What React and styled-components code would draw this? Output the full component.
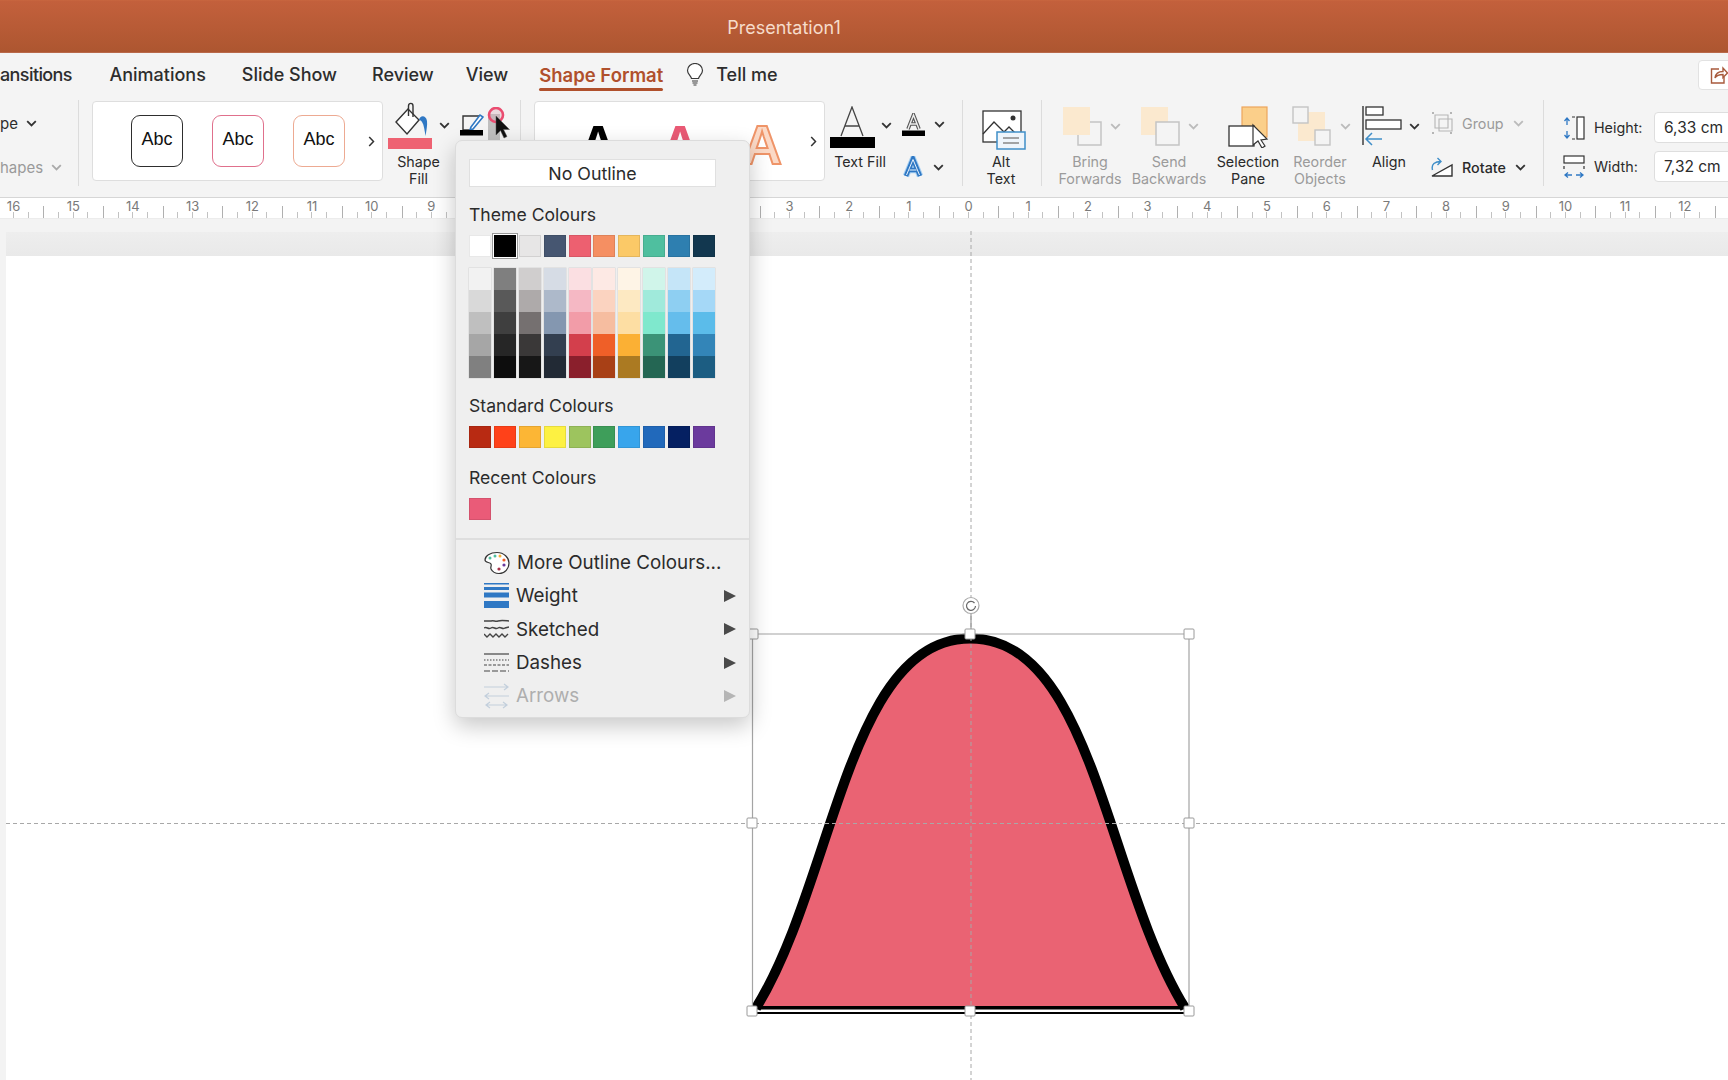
import React from "react";
import styled, { createGlobalStyle } from "styled-components";

const GlobalStyle = createGlobalStyle`
  html, body {
    margin: 0;
    padding: 0;
    background: #fff;
  }
  body {
    font-family: Inter, "Liberation Sans", sans-serif;
    color: #2b2b2b;
  }
  svg {
    display: block;
    flex: none;
  }
`;

const Page = styled.div`
  position: relative;
  width: 1728px;
  height: 1080px;
  overflow: hidden;
  display: flex;
  flex-direction: column;
  background: #f4f4f4;
`;

const TitleBar = styled.div`
  height: 53px;
  flex: none;
  display: flex;
  align-items: center;
  justify-content: center;
  box-sizing: border-box;
  padding: 3px 160px 0 0;
  background: linear-gradient(#c8663f 0, #c3603c 3%, #ad5630 100%);
  border-bottom: 1px solid #b9694a;
  color: #f6dccb;
  font-size: 18px;
`;

const TabRow = styled.div`
  height: 43px;
  flex: none;
  display: flex;
  align-items: center;
  gap: 36px;
`;

const Tab = styled.div`
  position: relative;
  margin-left: ${(p) => p.$ml || 0}px;
  letter-spacing: ${(p) => p.$tight || 0}px;
  font-size: ${(p) => (p.$active ? 18.5 : 18)}px;
  font-weight: ${(p) => (p.$active ? 600 : 500)};
  color: ${(p) => (p.$active ? "#b0502c" : "#2d2d2d")};

  ${(p) =>
    p.$active &&
    `
    &::after {
      content: "";
      position: absolute;
      left: 0;
      right: 0;
      bottom: -5px;
      height: 3px;
      border-radius: 2px;
      background: #b0502c;
    }
  `}
`;

const TellMe = styled(Tab)`
  display: flex;
  align-items: center;
  gap: 12px;
  margin-left: -13px;
`;

const ShareButton = styled.div`
  margin-left: auto;
  margin-right: -20px;
  width: 50px;
  height: 30px;
  box-sizing: border-box;
  padding-left: 11px;
  display: flex;
  align-items: center;
  background: #fff;
  border: 1px solid #e2e2e2;
  border-radius: 4px;
`;

const Ribbon = styled.div`
  height: 101px;
  flex: none;
  display: flex;
  align-items: flex-start;
`;

const Sep = styled.div`
  width: 1px;
  height: 86px;
  margin-top: 4px;
  margin-left: ${(p) => p.$ml || 0}px;
  flex: none;
  background: #dcdcdc;
`;

const OptionsCell = styled.div`
  width: 78px;
  flex: none;
  display: flex;
  flex-direction: column;
  gap: 28px;
  padding-top: 19px;
  box-sizing: border-box;
`;

const InlineOption = styled.div`
  display: flex;
  align-items: center;
  gap: 8px;
  height: 16px;
  font-size: 15px;
  color: ${(p) => (p.$muted ? "#9a9a9a" : "#2d2d2d")};
`;

const Gallery = styled.div`
  width: ${(p) => p.$w}px;
  height: 80px;
  margin-top: 5px;
  margin-left: ${(p) => p.$ml}px;
  flex: none;
  box-sizing: border-box;
  display: flex;
  align-items: center;
  background: #fff;
  border: 1px solid #dedede;
  border-radius: 4px;
`;

const AbcRow = styled.div`
  display: flex;
  gap: 29px;
  padding-left: 38px;
  width: 275px;
  box-sizing: border-box;
`;

const AbcBox = styled.div`
  width: 52px;
  height: 52px;
  flex: none;
  box-sizing: border-box;
  display: flex;
  align-items: center;
  justify-content: center;
  padding-bottom: 4px;
  background: #fff;
  border: 1.5px solid ${(p) => p.$color};
  border-radius: 9px;
  font-family: "Liberation Sans", sans-serif;
  font-size: 18px;
  color: #111;
`;

const ArtRow = styled.div`
  display: flex;
  width: 275px;
  padding: 7px 0 0 22px;
  box-sizing: border-box;
`;

const ArtLetter = styled.div`
  width: 82px;
  text-align: center;
  font-family: "Liberation Sans", sans-serif;
  font-weight: 700;
  font-size: 55px;
  line-height: 60px;
  color: ${(p) => p.$fill};
  -webkit-text-stroke: ${(p) => p.$stroke || "0"};
`;

const BigTool = styled.div`
  width: ${(p) => p.$w}px;
  margin-left: ${(p) => p.$ml || 0}px;
  flex: none;
  display: flex;
  flex-direction: column;
  align-items: center;
`;

const BigIconRow = styled.div`
  height: 58px;
  padding-top: ${(p) => p.$top || 0}px;
  padding-left: ${(p) => p.$pl || 0}px;
  box-sizing: border-box;
  width: 100%;
  display: flex;
  align-items: flex-start;
`;

const ChevronSlot = styled.div`
  display: flex;
  padding-top: ${(p) => p.$top}px;
  margin-left: ${(p) => p.$ml || 0}px;
`;

const ToolLabel = styled.div`
  font-size: 14.3px;
  line-height: 16.5px;
  text-align: center;
  white-space: nowrap;
  color: ${(p) => (p.$muted ? "#9b9b9b" : "#2a2a2a")};
`;

const PenCell = styled.div`
  position: relative;
  width: 60px;
  height: 60px;
  margin-left: 11px;
  flex: none;
  padding-top: 16px;
  box-sizing: border-box;
`;

const PenHighlight = styled.div`
  position: absolute;
  left: 28px;
  top: 18px;
  width: 12px;
  height: 26px;
  background: #bfbfbf;
`;

const CursorMark = styled.div`
  position: absolute;
  left: 27px;
  top: 11px;
`;

const SmallColumn = styled.div`
  width: ${(p) => p.$w}px;
  margin-left: ${(p) => p.$ml}px;
  flex: none;
  display: flex;
  flex-direction: column;
  gap: ${(p) => p.$gap}px;
  padding-top: ${(p) => p.$top}px;
  box-sizing: border-box;
`;

const SmallRow = styled.div`
  display: flex;
  align-items: center;
  gap: ${(p) => p.$gap}px;
  height: ${(p) => p.$h}px;
`;

const SmallText = styled.div`
  font-size: 14.3px;
  color: ${(p) => (p.$muted ? "#9b9b9b" : "#2a2a2a")};
  font-weight: ${(p) => (p.$muted ? 400 : 500)};
`;

const SizeColumn = styled.div`
  margin-left: 19px;
  flex: none;
  padding-top: 16px;
  display: flex;
  flex-direction: column;
  gap: 8px;
`;

const SizeRow = styled.div`
  display: flex;
  align-items: center;
  height: 31px;
`;

const SizeLabel = styled.div`
  width: 60px;
  margin-left: 9px;
  font-size: 14.3px;
`;

const SizeInput = styled.div`
  width: 100px;
  height: 31px;
  box-sizing: border-box;
  padding-left: 9px;
  display: flex;
  align-items: center;
  background: #fff;
  border: 1px solid #dedede;
  border-radius: 4px;
  font-size: 15.5px;
`;

const Ruler = styled.div`
  height: 22px;
  flex: none;
  box-sizing: border-box;
  display: flex;
  overflow: hidden;
  background: #fff;
  border-top: 1px solid #d6d6d6;
  border-bottom: 1px solid #ececec;
`;

const RulerCell = styled.div`
  width: 59.7px;
  flex: none;
  margin-left: ${(p) => (p.$first ? "-16.3px" : 0)};
  text-align: center;
  font-size: 13px;
  line-height: 17px;
  color: #7a7a7a;
  background-image:
    linear-gradient(#b0b0b0, #b0b0b0),
    linear-gradient(#c2c2c2, #c2c2c2),
    linear-gradient(#c2c2c2, #c2c2c2),
    linear-gradient(#c2c2c2, #c2c2c2);
  background-repeat: no-repeat;
  background-size: 1px 12px, 1px 6px, 1px 6px, 1px 6px;
  background-position: 0 100%, 25% 100%, 50% 100%, 75% 100%;
`;

const Canvas = styled.div`
  position: relative;
  flex: 1;
  display: flex;
  flex-direction: column;
  padding: 13px 0 0 6px;
  background: #f3f3f3;
`;

const SlideBand = styled.div`
  height: 24px;
  flex: none;
  background: linear-gradient(#eeeeee, #e9e9e9);
`;

const Slide = styled.div`
  flex: 1;
  background: #fff;
`;

const SlideDrawing = styled.svg`
  position: absolute;
  left: 0;
  top: 0;
  width: 1728px;
  height: 861px;
`;

const OutlineMenu = styled.div`
  position: absolute;
  left: 455px;
  top: 140px;
  width: 295px;
  height: 578px;
  box-sizing: border-box;
  padding-top: 18px;
  background: #efefef;
  border: 1px solid #dcdcdc;
  border-radius: 7px;
  box-shadow: 0 8px 22px rgba(0, 0, 0, 0.22);
`;

const MenuBody = styled.div`
  padding-left: 13px;
`;

const NoOutline = styled.div`
  width: 247px;
  height: 28px;
  box-sizing: border-box;
  display: flex;
  align-items: center;
  justify-content: center;
  background: #fff;
  border: 1px solid #e0e0e0;
  font-size: 17.8px;
  color: #2b2b2b;
`;

const SectionLabel = styled.div`
  margin-top: ${(p) => p.$mt}px;
  margin-bottom: 9px;
  height: 22px;
  line-height: 22px;
  font-size: 17.6px;
  color: #2b2b2b;
`;

const SwatchRow = styled.div`
  display: flex;
  gap: 2.9px;
`;

const Swatch = styled.div`
  width: 22px;
  height: 22px;
  flex: none;
  box-sizing: border-box;
  background: ${(p) => p.$color};
  border: 1px solid rgba(0, 0, 0, 0.09);
  box-shadow: ${(p) => (p.$selected ? "0 0 0 1px #fff, 0 0 0 2px #999" : "none")};
`;

const ShadeGrid = styled.div`
  display: flex;
  gap: 2.9px;
  margin-top: 10.5px;
`;

const ShadeColumn = styled.div`
  width: 22px;
  flex: none;
  box-shadow: 0 0 0 0.5px rgba(0, 0, 0, 0.1);
`;

const Shade = styled.div`
  height: 22px;
  background: ${(p) => p.$color};
`;

const MenuDivider = styled.div`
  height: 2px;
  margin-top: 18px;
  margin-bottom: 6px;
  background: #dedede;
`;

const MenuRow = styled.div`
  height: 33.3px;
  display: flex;
  align-items: center;
  gap: 7px;
  padding: 0 13px 0 28px;
  font-size: 18.8px;
  color: ${(p) => (p.$disabled ? "#aeaeae" : "#2b2b2b")};
`;

const MenuArrow = styled.div`
  margin-left: auto;
  width: 0;
  height: 0;
  border-top: 6px solid transparent;
  border-bottom: 6px solid transparent;
  border-left: 12px solid ${(p) => (p.$disabled ? "#b5b5b5" : "#4a4a4a")};
`;

const Chevron = ({ color = "#333" }) => (
  <svg width="11" height="7" viewBox="0 0 11 7" fill="none">
    <path d="M1.2 1.2 5.500 5.500 9.800 1.200" stroke={color} strokeWidth="1.800" />
  </svg>
);

const MoreChevron = () => (
  <svg width="7" height="11" viewBox="0 0 7 11" fill="none">
    <path d="M1.200 1 5.500 5.500 1.200 10" stroke="#333" strokeWidth="1.500" />
  </svg>
);

const BulbIcon = () => (
  <svg width="18" height="23" viewBox="0 0 18 23" fill="none" stroke="#3a3a3a" strokeWidth="1.200">
    <path d="M5.500 15.500C4.800 12.500 1.500 11 1.500 7.500a7.500 7 0 0 1 15 0c0 3.500-3.300 5-4 8z" fill="#fff" />
    <path d="M6 18h6M6.500 20h5M7.500 22h3" />
  </svg>
);

const ShareIcon = () => (
  <svg width="18" height="20" viewBox="0 0 18 20" fill="none" stroke="#a85a3c" strokeWidth="1.400">
    <path d="M9 4H1.500v14H14v-6" />
    <path d="M5 13c.5-4 3.500-6.500 8-6.500V3l4.500 5-4.500 4.500V9.500c-3.500 0-6.500 1-8 3.500z" fill="#fff" />
  </svg>
);

const ShapeFillIcon = () => (
  <svg width="44" height="48" viewBox="0 0 44 48">
    <path d="M8 21 20 8l11 11-12 14z" fill="#fff" stroke="#333" strokeWidth="1.400" />
    <path d="M20.500 15V5c0-3.500 4.500-3.500 4.500 0v11" fill="none" stroke="#333" strokeWidth="1.400" />
    <path d="M31 19c1-5 7-5 8 1 .5 4-.5 9-1.500 15-1-6-1.500-11-3.500-14-1-1.500-2-2-3-2z" fill="#2f78c4" />
    <rect x="0" y="37" width="44" height="11" fill="#ee6272" />
  </svg>
);

const OutlinePenIcon = () => (
  <svg width="24" height="24" viewBox="0 0 24 24" fill="none">
    <path d="M20 4H3v14h10" stroke="#333" strokeWidth="1.400" />
    <path d="M11 15 20 3l3 2-10 12-3 1z" fill="#fff" stroke="#2f78c4" strokeWidth="1.600" />
    <rect x="0" y="18" width="23" height="5.500" fill="#000" />
  </svg>
);

const CursorWithRing = () => (
  <svg width="26" height="40" viewBox="0 0 26 40">
    <circle cx="9" cy="8" r="7" fill="#d9a9b4" fillOpacity=".35" stroke="#ea4c70" strokeWidth="2.600" />
    <path d="M9 9v19l4.500-4.500 3.500 7.500 3-1.500-3.500-7h6z" fill="#111" stroke="#555" strokeWidth=".5" />
  </svg>
);

const TextFillIcon = () => (
  <svg width="45" height="42" viewBox="0 0 45 42" fill="none">
    <path d="M11 30 22 1l11 29M15 20h14" stroke="#444" strokeWidth="1.300" />
    <rect x="0" y="31" width="45" height="11" fill="#000" />
  </svg>
);

const TextOutlineIcon = () => (
  <svg width="23" height="23" viewBox="0 0 23 23" fill="none">
    <path d="M6 16 11.500 2 17 16M8 11h7" stroke="#555" strokeWidth="3.600" />
    <path d="M6 16 11.500 2 17 16M8 11h7" stroke="#eee" strokeWidth="1.400" />
    <rect x="0" y="17.500" width="23" height="5.500" fill="#000" />
  </svg>
);

const TextEffectIcon = () => (
  <svg width="22" height="22" viewBox="0 0 22 22" fill="none">
    <path d="M4 20 11 3l7 17M7 14h8" stroke="#a8d0f2" strokeWidth="6.500" />
    <path d="M4 20 11 3l7 17M7 14h8" stroke="#2f78c4" strokeWidth="4.500" />
    <path d="M4.500 19 11 3.500 17.500 19M7.500 14h7" stroke="#e8f2fb" strokeWidth="1" />
  </svg>
);

const AltTextIcon = () => (
  <svg width="44" height="40" viewBox="0 0 44 40" fill="none">
    <rect x="1" y="1" width="38" height="31" fill="#fff" stroke="#333" strokeWidth="1.300" />
    <path d="M1 24 12 12l10 10 5-5 9 9" stroke="#333" strokeWidth="1.300" />
    <circle cx="31" cy="8" r="2.500" fill="#333" />
    <rect x="15" y="22" width="28" height="17" fill="#eef5fb" stroke="#3f8ec8" strokeWidth="1.500" />
    <path d="M21 28h16M21 33h16" stroke="#888" strokeWidth="1.500" />
  </svg>
);

const BringIcon = ({ backward }) => (
  <svg width="40" height="40" viewBox="0 0 40 40" fill="none">
    <rect x="0" y="1" width="27" height="28" fill="#fbe9cf" />
    {backward ? (
      <rect x="15" y="16" width="23" height="23" fill="#f4f4f4" stroke="#c4c4c4" strokeWidth="1.500" />
    ) : (
      <path d="M27 16h11v23H15V29" stroke="#c4c4c4" strokeWidth="1.500" />
    )}
  </svg>
);

const SelectionIcon = () => (
  <svg width="42" height="42" viewBox="0 0 42 42" fill="none">
    <rect x="14" y="1" width="25" height="30" fill="#fbcf8a" stroke="#eda55c" strokeWidth="1.200" />
    <rect x="1" y="20" width="25" height="20" fill="#fff" stroke="#333" strokeWidth="1.300" />
    <path d="M25 19v20l5-4 4 7 3-2-4-6 6-1z" fill="#fff" stroke="#333" strokeWidth="1.200" />
  </svg>
);

const ReorderIcon = () => (
  <svg width="40" height="40" viewBox="0 0 40 40" fill="none">
    <rect x="6" y="6" width="27" height="29" fill="#fbe9cf" />
    <rect x="1" y="1" width="15" height="16" fill="#f4f4f4" stroke="#c4c4c4" strokeWidth="1.400" />
    <rect x="23" y="24" width="15" height="15" fill="#f4f4f4" stroke="#c4c4c4" strokeWidth="1.400" />
  </svg>
);

const AlignIcon = () => (
  <svg width="40" height="40" viewBox="0 0 40 40" fill="none">
    <path d="M1 0v39" stroke="#333" strokeWidth="1.400" />
    <rect x="4" y="1" width="17" height="8" fill="#fff" stroke="#333" strokeWidth="1.300" />
    <rect x="4" y="14" width="35" height="9" fill="#fff" stroke="#333" strokeWidth="1.300" />
    <path d="M20 33H4M10 27l-6 6 6 6" stroke="#3f8ec8" strokeWidth="1.500" />
  </svg>
);

const GroupIcon = () => (
  <svg width="22" height="23" viewBox="0 0 22 23" fill="none" stroke="#b5b5b5" strokeWidth="1.100">
    <path d="M4 3h13v13H4z M8 7h13v12H8z" />
    <path d="M1 1h2M19 1h2M1 21h2M19 21h2" strokeWidth="2" />
  </svg>
);

const RotateIcon = () => (
  <svg width="22" height="20" viewBox="0 0 22 20" fill="none">
    <path d="M1 19 21 8V19z" stroke="#333" strokeWidth="1.400" fill="#fff" />
    <path d="M1.500 13C0 7 4 4.500 10 4.500M6.500 1 10 4.500 6.500 8" stroke="#3f8ec8" strokeWidth="1.400" />
  </svg>
);

const HeightIcon = () => (
  <svg width="22" height="24" viewBox="0 0 22 24" fill="none">
    <rect x="14" y="1" width="7" height="22" fill="#fff" stroke="#333" strokeWidth="1.200" />
    <path d="M9 1h3M9 23h3" stroke="#333" strokeWidth="1.200" />
    <path d="M4 2v7M1.500 5 4 2l2.500 3M4 15v7M1.500 19 4 22l2.500-3" stroke="#2f78c4" strokeWidth="1.300" />
  </svg>
);

const WidthIcon = () => (
  <svg width="22" height="24" viewBox="0 0 22 24" fill="none">
    <rect x="1" y="1" width="20" height="7" fill="#fff" stroke="#333" strokeWidth="1.200" />
    <path d="M1 11v3M21 11v3" stroke="#333" strokeWidth="1.200" />
    <path d="M2 20h7M5 17.500 2 20l3 2.500M13 20h7M17 17.500l3 2.500-3 2.500" stroke="#2f78c4" strokeWidth="1.300" />
  </svg>
);

const PaletteIcon = () => (
  <svg width="26" height="24" viewBox="0 0 26 24" fill="none">
    <path d="M13 1.500C6 1.500 1 5 1 9c0 3 5 2 6 4s-1 3 0 5 4 4.500 8 4.500c6 0 10-5 10-10.500S20 1.500 13 1.500z" fill="#fff" stroke="#333" strokeWidth="1.200" />
    <circle cx="6" cy="7" r="1.500" fill="#4fbf9f" />
    <circle cx="11" cy="5" r="1.500" fill="#4fbf9f" />
    <circle cx="16" cy="5" r="1.500" fill="#fbb034" />
    <circle cx="20" cy="9" r="1.600" fill="#ef5f28" />
    <circle cx="20" cy="14" r="1.600" fill="#6b3a9d" />
    <circle cx="15" cy="18" r="1.600" fill="#a8324a" />
  </svg>
);

const WeightIcon = () => (
  <svg width="25" height="26" viewBox="0 0 25 26" fill="#2f78c4">
    <rect y="0" width="25" height="1.500" />
    <rect y="4" width="25" height="3" />
    <rect y="9.500" width="25" height="5" />
    <rect y="18" width="25" height="7" />
  </svg>
);

const SketchedIcon = () => (
  <svg width="25" height="20" viewBox="0 0 25 20" fill="none" stroke="#444" strokeWidth="1.400">
    <path d="M0 2h7c3-1 4 1 7 0s6-.5 11 0" />
    <path d="M0 9c3-2 4 2 7 0s4 2 7 0 4 2 7 0l4-1" />
    <path d="M0 15l3 3 3-3 3 3 3-3 3 3 3-3 3 3 3-3" />
  </svg>
);

const DashesIcon = () => (
  <svg width="25" height="20" viewBox="0 0 25 20" fill="none" stroke="#444">
    <path d="M0 1h25" strokeWidth="1.200" />
    <path d="M0 7h25" strokeWidth="1.200" strokeDasharray="1.500 1.500" />
    <path d="M0 12h25" strokeWidth="1.200" strokeDasharray="3 1.500" />
    <path d="M0 18h25" strokeWidth="1.200" strokeDasharray="6 2" />
  </svg>
);

const ArrowsIcon = () => (
  <svg width="25" height="26" viewBox="0 0 25 26" fill="none" stroke="#c3cfdc" strokeWidth="1.200">
    <path d="M0 4h24M20 1l4 3-4 3" />
    <path d="M25 13H1M5 10l-4 3 4 3" />
    <path d="M3 22h19M6 19l-4 3 4 3M19 19l4 3-4 3" />
  </svg>
);

const themeColours = ["#ffffff", "#000000", "#e7e6e6", "#465671", "#ed6070", "#f58f62", "#fbc967", "#4fbf9f", "#2e7fb0", "#12374f"];

const shadeColumns = [
  ["#f2f2f2", "#d9d9d9", "#bfbfbf", "#a6a6a6", "#808080"],
  ["#7f7f7f", "#595959", "#3f3f3f", "#262626", "#0d0d0d"],
  ["#d0cece", "#aeaaaa", "#757070", "#3a3838", "#171717"],
  ["#d6dce5", "#adb9ca", "#8497b0", "#333f50", "#222a35"],
  ["#fbdfe2", "#f5b8c4", "#f29ca8", "#d33f4c", "#8a1f2c"],
  ["#fde9e4", "#fbd3c0", "#f6bda0", "#ef5f28", "#a84016"],
  ["#fef4e6", "#fde9c2", "#fddea3", "#fbb034", "#ab7a22"],
  ["#d0f5ea", "#a0eadb", "#7fe8cd", "#3b9377", "#246653"],
  ["#c5e5f8", "#8ecff2", "#65bdec", "#226591", "#123f5e"],
  ["#d3ecfb", "#a5d8f7", "#5bbcea", "#3385b8", "#1c5d82"],
];

const standardColours = ["#b82a12", "#ff4119", "#fcb635", "#fdf142", "#9dc45e", "#3e9e5a", "#38a5ec", "#2169bb", "#052062", "#6b3a9d"];

// numbers that sit under the open menu are left out
const rulerMarks = [16, 15, 14, 13, 12, 11, 10, 9, "", "", "", "", "", 3, 2, 1, 0, 1, 2, 3, 4, 5, 6, 7, 8, 9, 10, 11, 12, ""];

const Handle = ({ x, y }) => (
  <rect x={x - 5} y={y - 5} width="10" height="10" rx="1" fill="#fff" stroke="#9a9a9a" />
);

const BellShape = () => (
  <SlideDrawing viewBox="0 219 1728 861">
    <path
      d="M756 1007C835 880 848 638.500 970.500 638.500C1093 638.500 1106 880 1185 1007Z"
      fill="#ea6373"
    />
    <path
      d="M756 1008C835 880 848 638.500 970.500 638.500C1093 638.500 1106 880 1185 1008"
      fill="none"
      stroke="#000"
      strokeWidth="10"
    />
    <rect x="754" y="1006" width="433" height="3.500" fill="#000" />
    <rect x="754" y="1012" width="433" height="2" fill="#000" />
    <path d="M752.500 1011V634H1189V1011" fill="none" stroke="#a4a4a4" strokeWidth="1.200" />
    <path d="M971 231V1080" stroke="#a8a8a8" strokeDasharray="4 3" />
    <path d="M6 823.500H1728" stroke="#a8a8a8" strokeDasharray="4 3" />
    <path d="M971 613V634" stroke="#999" strokeWidth="1.200" />
    <circle cx="971" cy="605.500" r="8" fill="#fff" stroke="#aaa" strokeWidth="1.200" />
    <path d="M974.500 603a4.500 4.500 0 1 0 1 3" fill="none" stroke="#666" strokeWidth="1.200" />
    <Handle x={753} y={634} />
    <Handle x={970} y={634} />
    <Handle x={1189} y={634} />
    <Handle x={752} y={823} />
    <Handle x={1189} y={823} />
    <Handle x={752} y={1011} />
    <Handle x={970} y={1011} />
    <Handle x={1189} y={1011} />
  </SlideDrawing>
);

const App = () => {
  return (
    <Page>
      <GlobalStyle />
      <TitleBar>Presentation1</TitleBar>

      <TabRow>
        <Tab $tight={-0.6}>ansitions</Tab>
        <Tab $ml={1.5}>Animations</Tab>
        <Tab>Slide Show</Tab>
        <Tab $ml={-1}>Review</Tab>
        <Tab $ml={-4}>View</Tab>
        <Tab $active $ml={-5}>
          Shape Format
        </Tab>
        <TellMe>
          <BulbIcon />
          Tell me
        </TellMe>
        <ShareButton>
          <ShareIcon />
        </ShareButton>
      </TabRow>

      <Ribbon>
        <OptionsCell>
          <InlineOption>
            pe <Chevron />
          </InlineOption>
          <InlineOption $muted>
            hapes <Chevron color="#aaa" />
          </InlineOption>
        </OptionsCell>
        <Sep />

        <Gallery $w={291} $ml={13}>
          <AbcRow>
            <AbcBox $color="#2e2e2e">Abc</AbcBox>
            <AbcBox $color="#e0708c">Abc</AbcBox>
            <AbcBox $color="#edaa92">Abc</AbcBox>
          </AbcRow>
          <MoreChevron />
        </Gallery>

        <BigTool $w={61} $ml={5}>
          <BigIconRow $top={5}>
            <ShapeFillIcon />
            <ChevronSlot $top={21} $ml={7}>
              <Chevron />
            </ChevronSlot>
          </BigIconRow>
          <ToolLabel>
            Shape
            <br />
            Fill
          </ToolLabel>
        </BigTool>

        <PenCell>
          <OutlinePenIcon />
          <PenHighlight />
          <CursorMark>
            <CursorWithRing />
          </CursorMark>
        </PenCell>
        <Sep />

        <Gallery $w={291} $ml={13}>
          <ArtRow>
            <ArtLetter $fill="#000">A</ArtLetter>
            <ArtLetter $fill="#ea5a75">A</ArtLetter>
            <ArtLetter $fill="#fbd9c6" $stroke="2px #ef9468">A</ArtLetter>
          </ArtRow>
          <MoreChevron />
        </Gallery>

        <BigTool $w={60} $ml={5}>
          <BigIconRow $top={10}>
            <TextFillIcon />
            <ChevronSlot $top={16} $ml={6}>
              <Chevron />
            </ChevronSlot>
          </BigIconRow>
          <ToolLabel>Text Fill</ToolLabel>
        </BigTool>

        <SmallColumn $w={60} $ml={12} $gap={20} $top={16}>
          <SmallRow $gap={9} $h={24}>
            <TextOutlineIcon />
            <Chevron />
          </SmallRow>
          <SmallRow $gap={9} $h={22}>
            <TextEffectIcon />
            <Chevron />
          </SmallRow>
        </SmallColumn>
        <Sep />

        <BigTool $w={50} $ml={13}>
          <BigIconRow $top={14} $pl={6}>
            <AltTextIcon />
          </BigIconRow>
          <ToolLabel>
            Alt
            <br />
            Text
          </ToolLabel>
        </BigTool>
        <Sep $ml={15} />

        <BigTool $w={64} $ml={16}>
          <BigIconRow $top={10} $pl={5}>
            <BringIcon />
            <ChevronSlot $top={17} $ml={7}>
              <Chevron color="#bbb" />
            </ChevronSlot>
          </BigIconRow>
          <ToolLabel $muted>
            Bring
            <br />
            Forwards
          </ToolLabel>
        </BigTool>

        <BigTool $w={76} $ml={9}>
          <BigIconRow $top={10} $pl={10}>
            <BringIcon backward />
            <ChevronSlot $top={17} $ml={7}>
              <Chevron color="#bbb" />
            </ChevronSlot>
          </BigIconRow>
          <ToolLabel $muted>
            Send
            <br />
            Backwards
          </ToolLabel>
        </BigTool>

        <BigTool $w={62} $ml={10}>
          <BigIconRow $top={10} $pl={11}>
            <SelectionIcon />
          </BigIconRow>
          <ToolLabel>
            Selection
            <br />
            Pane
          </ToolLabel>
        </BigTool>

        <BigTool $w={56} $ml={13}>
          <BigIconRow $top={10}>
            <ReorderIcon />
            <ChevronSlot $top={17} $ml={8}>
              <Chevron color="#bbb" />
            </ChevronSlot>
          </BigIconRow>
          <ToolLabel $muted>
            Reorder
            <br />
            Objects
          </ToolLabel>
        </BigTool>

        <BigTool $w={60} $ml={11}>
          <BigIconRow $top={10} $pl={3}>
            <AlignIcon />
            <ChevronSlot $top={17} $ml={7}>
              <Chevron />
            </ChevronSlot>
          </BigIconRow>
          <ToolLabel>Align</ToolLabel>
        </BigTool>

        <SmallColumn $w={112} $ml={12} $gap={22} $top={16}>
          <SmallRow $gap={9} $h={23}>
            <GroupIcon />
            <SmallText $muted>Group</SmallText>
            <Chevron color="#bbb" />
          </SmallRow>
          <SmallRow $gap={9} $h={20}>
            <RotateIcon />
            <SmallText>Rotate</SmallText>
            <Chevron />
          </SmallRow>
        </SmallColumn>
        <Sep />

        <SizeColumn>
          <SizeRow>
            <HeightIcon />
            <SizeLabel>Height:</SizeLabel>
            <SizeInput>6,33 cm</SizeInput>
          </SizeRow>
          <SizeRow>
            <WidthIcon />
            <SizeLabel>Width:</SizeLabel>
            <SizeInput>7,32 cm</SizeInput>
          </SizeRow>
        </SizeColumn>
      </Ribbon>

      <Ruler>
        {rulerMarks.map((mark, i) => (
          <RulerCell key={i} $first={i === 0}>
            {mark}
          </RulerCell>
        ))}
      </Ruler>

      <Canvas>
        <SlideBand />
        <Slide />
        <BellShape />
      </Canvas>

      <OutlineMenu>
        <MenuBody>
          <NoOutline>No Outline</NoOutline>
          <SectionLabel $mt={17}>Theme Colours</SectionLabel>
          <SwatchRow>
            {themeColours.map((c) => (
              <Swatch key={c} $color={c} $selected={c === "#000000"} />
            ))}
          </SwatchRow>
          <ShadeGrid>
            {shadeColumns.map((col, i) => (
              <ShadeColumn key={i}>
                {col.map((c) => (
                  <Shade key={c} $color={c} />
                ))}
              </ShadeColumn>
            ))}
          </ShadeGrid>
          <SectionLabel $mt={17}>Standard Colours</SectionLabel>
          <SwatchRow>
            {standardColours.map((c) => (
              <Swatch key={c} $color={c} />
            ))}
          </SwatchRow>
          <SectionLabel $mt={19.5}>Recent Colours</SectionLabel>
          <SwatchRow>
            <Swatch $color="#ea5b78" />
          </SwatchRow>
        </MenuBody>
        <MenuDivider />
        <MenuRow>
          <PaletteIcon />
          More Outline Colours...
        </MenuRow>
        <MenuRow>
          <WeightIcon />
          Weight
          <MenuArrow />
        </MenuRow>
        <MenuRow>
          <SketchedIcon />
          Sketched
          <MenuArrow />
        </MenuRow>
        <MenuRow>
          <DashesIcon />
          Dashes
          <MenuArrow />
        </MenuRow>
        <MenuRow $disabled>
          <ArrowsIcon />
          Arrows
          <MenuArrow $disabled />
        </MenuRow>
      </OutlineMenu>
    </Page>
  );
};

export default App;
